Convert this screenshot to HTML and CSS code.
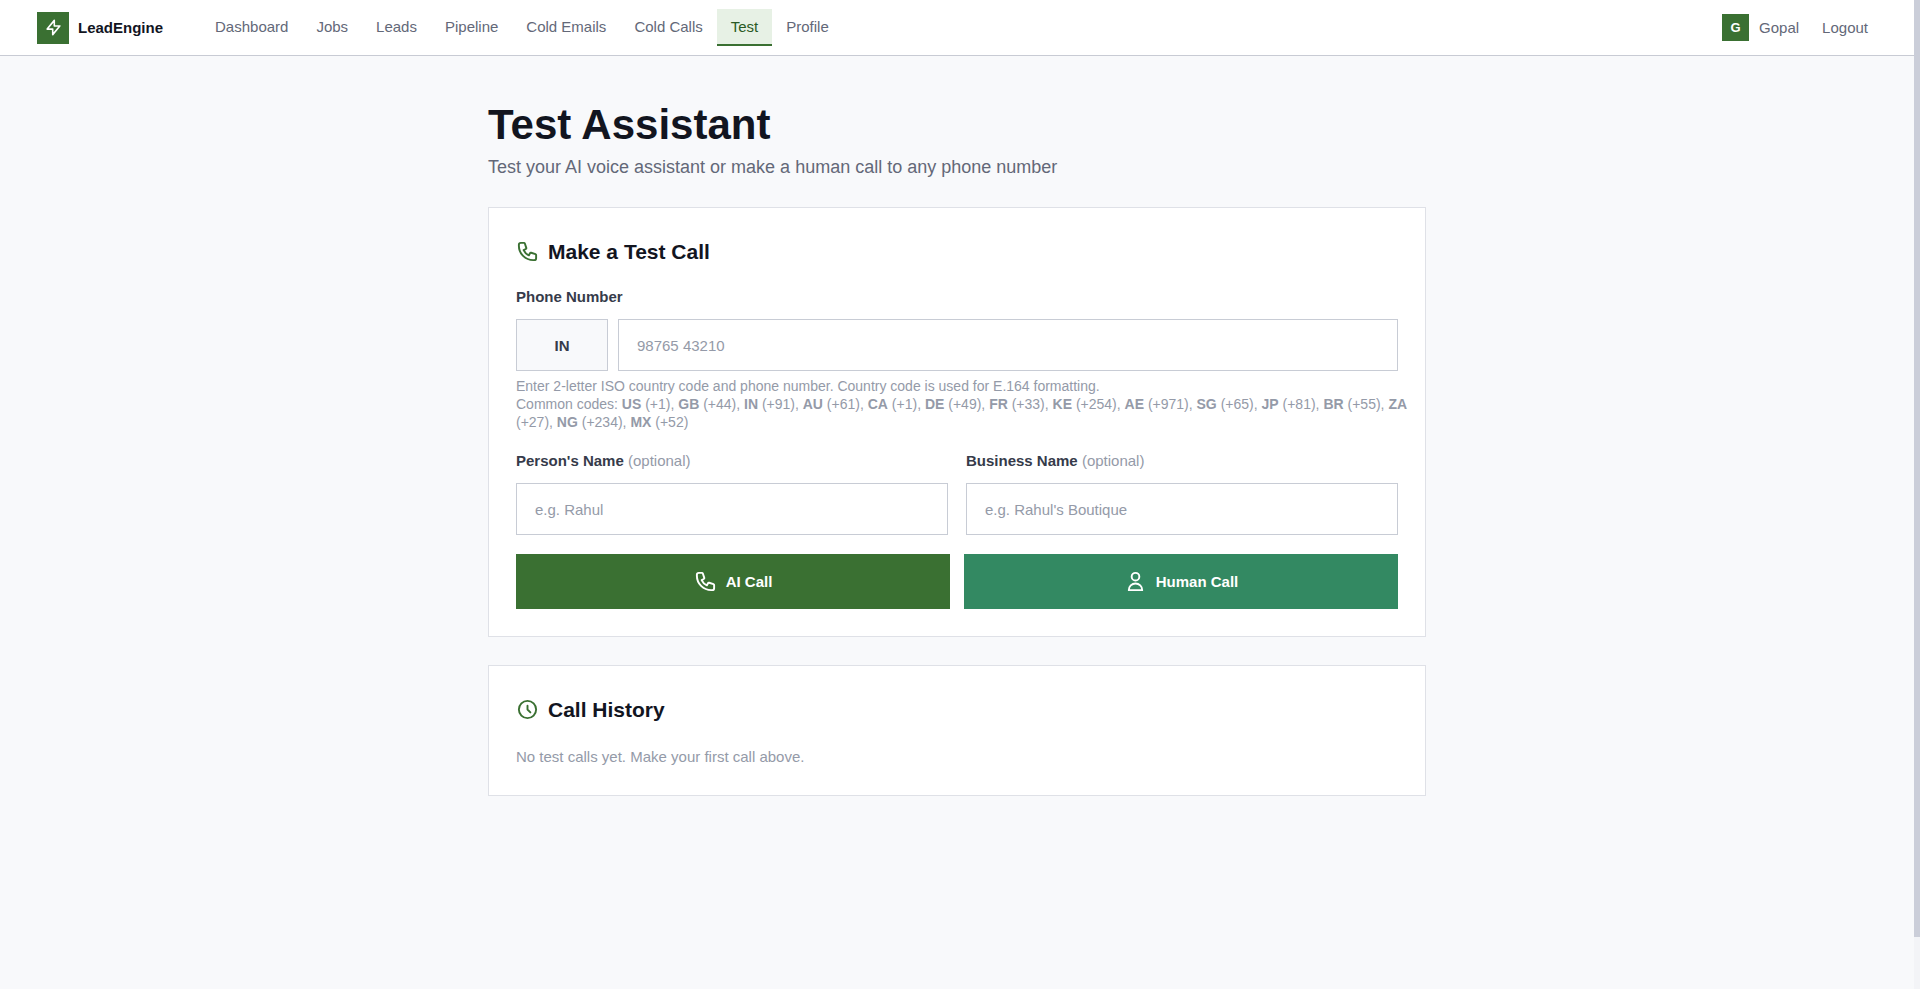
FILE: index.html
```html
<!DOCTYPE html>
<html lang="en">

<head>
    <meta charset="UTF-8">
    <meta name="viewport" content="width=device-width, initial-scale=1.0">
    <title>Test Assistant - LeadEngine</title>
    <link rel="stylesheet" href="styles.css">
</head>

<body>
    <header class="navbar">
        <div class="navbar-inner">
            <a href="#" class="brand">
                <span class="brand-icon">
                    <svg width="19" height="19" viewBox="0 0 24 24" fill="none" stroke="currentColor" stroke-width="2" stroke-linecap="round" stroke-linejoin="round"><path d="M13 10V3L4 14h7v7l9-11h-7z"/></svg>
                </span>
                LeadEngine
            </a>
            <nav class="nav-links">
                <a href="#">Dashboard</a>
                <a href="#">Jobs</a>
                <a href="#">Leads</a>
                <a href="#">Pipeline</a>
                <a href="#">Cold Emails</a>
                <a href="#">Cold Calls</a>
                <a href="#" class="active">Test</a>
                <a href="#">Profile</a>
            </nav>
            <div class="nav-user">
                <span class="avatar">G</span>
                <span>Gopal</span>
                <button type="button" class="logout">Logout</button>
            </div>
        </div>
    </header>

    <main class="page">
        <h1>Test Assistant</h1>
        <p class="subtitle">Test your AI voice assistant or make a human call to any phone number</p>

        <form class="card">
            <h2>
                <svg class="icon" viewBox="0 0 24 24"><path d="M3 5a2 2 0 012-2h3.28a1 1 0 01.948.684l1.498 4.493a1 1 0 01-.502 1.21l-2.257 1.13a11.042 11.042 0 005.516 5.516l1.13-2.257a1 1 0 011.21-.502l4.493 1.498a1 1 0 01.684.949V19a2 2 0 01-2 2h-1C9.716 21 3 14.284 3 6V5z"/></svg>
                Make a Test Call
            </h2>

            <div class="field">
                <label for="phone">Phone Number</label>
                <div class="phone-row">
                    <input type="text" class="country" value="IN" maxlength="2" aria-label="Country code">
                    <input type="tel" id="phone" placeholder="98765 43210">
                </div>
                <p class="help">
                    Enter 2-letter ISO country code and phone number. Country code is used for E.164 formatting.<br>
                    Common codes: <b>US</b> (+1), <b>GB</b> (+44), <b>IN</b> (+91), <b>AU</b> (+61), <b>CA</b> (+1), <b>DE</b> (+49), <b>FR</b> (+33), <b>KE</b> (+254), <b>AE</b> (+971), <b>SG</b> (+65), <b>JP</b> (+81), <b>BR</b> (+55), <b>ZA</b> (+27), <b>NG</b> (+234), <b>MX</b> (+52)
                </p>
            </div>

            <div class="name-row">
                <div class="field">
                    <label for="person">Person's Name <span>(optional)</span></label>
                    <input type="text" id="person" placeholder="e.g. Rahul">
                </div>
                <div class="field">
                    <label for="business">Business Name <span>(optional)</span></label>
                    <input type="text" id="business" placeholder="e.g. Rahul's Boutique">
                </div>
            </div>

            <div class="actions">
                <button type="button" class="btn btn-ai">
                    <svg class="icon" viewBox="0 0 24 24"><path d="M3 5a2 2 0 012-2h3.28a1 1 0 01.948.684l1.498 4.493a1 1 0 01-.502 1.21l-2.257 1.13a11.042 11.042 0 005.516 5.516l1.13-2.257a1 1 0 011.21-.502l4.493 1.498a1 1 0 01.684.949V19a2 2 0 01-2 2h-1C9.716 21 3 14.284 3 6V5z"/></svg>
                    AI Call
                </button>
                <button type="button" class="btn btn-human">
                    <svg class="icon" viewBox="0 0 24 24"><path d="M16 7a4 4 0 11-8 0 4 4 0 018 0zM12 14a7 7 0 00-7 7h14a7 7 0 00-7-7z"/></svg>
                    Human Call
                </button>
            </div>
        </form>

        <section class="card">
            <h2>
                <svg class="icon" viewBox="0 0 24 24"><path d="M12 8v4l3 3m6-3a9 9 0 11-18 0 9 9 0 0118 0z"/></svg>
                Call History
            </h2>
            <p class="empty">No test calls yet. Make your first call above.</p>
        </section>
    </main>

    <div class="scrollbar"><div class="scrollbar-thumb"></div></div>
</body>

</html>
```
FILE: styles.css
```css
* {
    box-sizing: border-box;
    margin: 0;
    padding: 0;
}

body {
    padding-right: 6px;
    font-family: "Liberation Sans", Arial, sans-serif;
    font-size: 15px;
    color: #12151f;
    background: #f8f9fb;
}

a {
    color: inherit;
    text-decoration: none;
}

input,
button {
    font: inherit;
}

/* slim page scrollbar */
.scrollbar {
    position: fixed;
    top: 0;
    right: 0;
    bottom: 0;
    width: 6px;
    background: #f3f4f7;
}

.scrollbar-thumb {
    height: calc(100% - 52px);
    background: #cbced9;
}

/* navbar */
.navbar {
    background: #fff;
    border-bottom: 1px solid #c8cbd4;
}

.navbar-inner {
    display: flex;
    align-items: center;
    max-width: 1840px;
    height: 55px;
    margin: 0 auto;
}

.brand {
    display: flex;
    align-items: center;
    gap: 9px;
    font-weight: bold;
}

.brand-icon {
    display: flex;
    align-items: center;
    justify-content: center;
    width: 32px;
    height: 32px;
    color: #fff;
    background: #3a7032;
}

.nav-links {
    display: flex;
    margin-left: 38px;
}

.nav-links a {
    padding: 9px 14px;
    line-height: 17px;
    color: #636878;
    border-bottom: 2px solid transparent;
}

.nav-links .active {
    color: #2a5a24;
    background: #e7f1e5;
    border-bottom-color: #3a7032;
}

.nav-user {
    display: flex;
    align-items: center;
    gap: 10px;
    margin-left: auto;
    color: #636878;
}

.avatar {
    width: 27px;
    height: 27px;
    font-size: 13px;
    font-weight: bold;
    line-height: 27px;
    text-align: center;
    color: #fff;
    background: #3a7032;
}

.logout {
    padding: 6px 9px 6px 13px;
    color: inherit;
    background: none;
    border: none;
}

/* page */
.page {
    max-width: 938px;
    margin: 0 auto;
    padding: 45px 0;
}

h1 {
    font-size: 42px;
    line-height: 48px;
}

.subtitle {
    margin: 6px 0 28px;
    font-size: 18px;
    line-height: 24px;
    color: #636878;
}

.card {
    margin-bottom: 28px;
    padding: 27px;
    background: #fff;
    border: 1px solid #dfe1e7;
}

h2 {
    display: flex;
    align-items: center;
    gap: 9px;
    margin-bottom: 19px;
    font-size: 21px;
    line-height: 33px;
}

.icon {
    width: 23px;
    height: 23px;
    fill: none;
    stroke: currentColor;
    stroke-width: 2;
    stroke-linecap: round;
    stroke-linejoin: round;
}

h2 .icon {
    color: #3a7032;
}

.field label {
    display: block;
    margin-bottom: 12px;
    font-weight: bold;
    line-height: 20px;
    color: #363b4a;
}

.field label span {
    font-weight: normal;
    color: #949aa8;
}

.field input {
    width: 100%;
    height: 52px;
    padding: 0 18px;
    color: #363b4a;
    background: #fff;
    border: 1px solid #c8ccd5;
    outline: none;
}

.field input::placeholder {
    color: #949aa8;
}

.phone-row {
    display: flex;
    gap: 10px;
}

.phone-row .country {
    flex: none;
    width: 92px;
    font-weight: bold;
    text-align: center;
    background: #f8f9fb;
}

.help {
    margin: 6px -12px 0 0;
    font-size: 14px;
    line-height: 18px;
    color: #949aa8;
}

.name-row {
    display: grid;
    grid-template-columns: 1fr 1fr;
    gap: 18px;
    margin: 20px 0 19px;
}

.actions {
    display: grid;
    grid-template-columns: 1fr 1fr;
    gap: 14px;
}

.btn {
    display: flex;
    align-items: center;
    justify-content: center;
    gap: 9px;
    height: 55px;
    font-weight: bold;
    color: #fff;
    border: none;
}

.btn-ai {
    background: #3a7032;
}

.btn-human {
    background: #338962;
}

.empty {
    line-height: 23px;
    color: #949aa8;
}
```
